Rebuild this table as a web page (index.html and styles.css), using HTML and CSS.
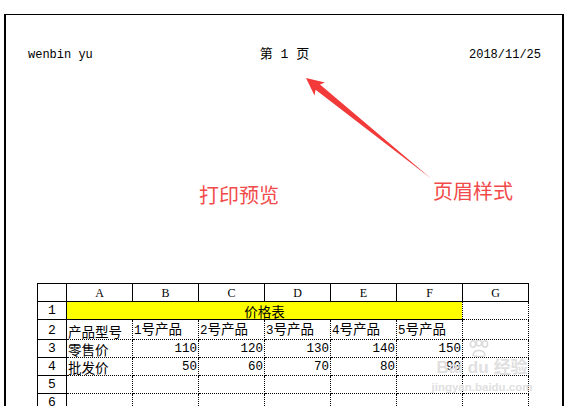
FILE: index.html
```html
<!DOCTYPE html>
<html lang="zh-CN">
<head>
<meta charset="utf-8">
<title>打印预览</title>
<link rel="stylesheet" href="styles.css">
</head>
<body>
<div class="page">
  <div class="header">
    <span class="h-left">wenbin yu</span>
    <span class="h-center">第 1 页</span>
    <span class="h-right">2018/11/25</span>
  </div>
  <table class="sheet">
    <colgroup>
      <col class="c-num"><col class="c"><col class="c"><col class="c"><col class="c"><col class="c"><col class="c"><col class="c">
    </colgroup>
    <tr class="colhead">
      <td></td><td>A</td><td>B</td><td>C</td><td>D</td><td>E</td><td>F</td><td>G</td>
    </tr>
    <tr>
      <td class="rn">1</td><td class="title" colspan="6">价格表</td><td class="d"></td>
    </tr>
    <tr>
      <td class="rn">2</td><td class="d">产品型号</td><td class="d"><span class="m">1</span>号产品</td><td class="d"><span class="m">2</span>号产品</td><td class="d"><span class="m">3</span>号产品</td><td class="d"><span class="m">4</span>号产品</td><td class="d"><span class="m">5</span>号产品</td><td class="d"></td>
    </tr>
    <tr>
      <td class="rn">3</td><td class="d">零售价</td><td class="d n">110</td><td class="d n">120</td><td class="d n">130</td><td class="d n">140</td><td class="d n">150</td><td class="d"></td>
    </tr>
    <tr>
      <td class="rn">4</td><td class="d">批发价</td><td class="d n">50</td><td class="d n">60</td><td class="d n">70</td><td class="d n">80</td><td class="d n">90</td><td class="d"></td>
    </tr>
    <tr>
      <td class="rn">5</td><td class="d"></td><td class="d"></td><td class="d"></td><td class="d"></td><td class="d"></td><td class="d"></td><td class="d"></td>
    </tr>
    <tr>
      <td class="rn">6</td><td class="d"></td><td class="d"></td><td class="d"></td><td class="d"></td><td class="d"></td><td class="d"></td><td class="d"></td>
    </tr>
  </table>
</div>

<svg class="arrow" width="567" height="406" viewBox="0 0 567 406">
  <polygon points="306,78 325,82.5 320,84.6 431,178.5 315.6,89.8 314.5,95.5" fill="#f23a3a"/>
</svg>
<div class="note note-preview">打印预览</div>
<div class="note note-header">页眉样式</div>

<div class="watermark">
  <svg class="paw" width="26" height="18" viewBox="0 0 26 18">
    <ellipse cx="7" cy="4" rx="2.6" ry="3.2" fill="none" stroke="#dcdcdc" stroke-width="1.6"/>
    <ellipse cx="13" cy="3" rx="2.6" ry="3" fill="none" stroke="#dcdcdc" stroke-width="1.6"/>
    <ellipse cx="19" cy="4" rx="2.6" ry="3.2" fill="none" stroke="#dcdcdc" stroke-width="1.6"/>
    <path d="M7 15 C8 9 18 9 19 15 C18 17 8 17 7 15 Z" fill="none" stroke="#dcdcdc" stroke-width="1.6"/>
  </svg>
  <div class="wm-brand">Bai<span class="wm-du">du</span>经验</div>
  <div class="wm-url">jingyan.baidu.com</div>
</div>
</body>
</html>
```
FILE: styles.css
```css
html, body {
  margin: 0;
  padding: 0;
  background: #fff;
  overflow: hidden;
}
body {
  width: 567px;
  height: 406px;
  position: relative;
  font-family: "Liberation Mono", "Noto Sans CJK SC", monospace;
  color: #000;
}
.page {
  margin: 14px 0 0 4px;
  width: 556px;
  height: 400px;
  border-top: 1px solid #000;
  border-left: 2px solid #000;
  border-right: 2px solid #000;
  box-sizing: content-box;
}
.header {
  display: grid;
  grid-template-columns: 1fr auto 1fr;
  align-items: center;
  padding: 33px 21px 0 22px;
  font-size: 12px;
  line-height: 14px;
}
.h-left { justify-self: start; }
.h-center {
  justify-self: center;
  font-size: 13px;
}
.h-right { justify-self: end; }

.sheet {
  margin: 221px 0 0 31px;
  border-collapse: collapse;
  table-layout: fixed;
  width: 491px;
  font-family: "Liberation Mono", "Noto Sans CJK SC", monospace;
}
.c-num { width: 29px; }
.c { width: 66px; }
.sheet td {
  height: 17px;
  padding: 0 1px;
  line-height: 16px;
  border: 1px solid #000;
  font-size: 14px;
  white-space: nowrap;
  overflow: hidden;
  vertical-align: bottom;
}
.colhead td {
  text-align: center;
  font-size: 12px;
  font-family: "Liberation Serif", serif;
}
.sheet td.rn {
  text-align: center;
  font-size: 13px;
}
.sheet td.d {
  border: 1px dotted #000;
  font-family: "Noto Sans CJK SC", sans-serif;
  font-size: 13.5px;
}
.sheet td.n {
  text-align: right;
  font-family: "Liberation Mono", monospace;
  font-size: 12.5px;
}
.m {
  font-family: "Liberation Mono", monospace;
  font-size: 12.5px;
}
.sheet td.title {
  background: #ffff00;
  text-align: center;
  border: 1px solid #000;
  border-right: 1px dotted #000;
  font-family: "Noto Sans CJK SC", sans-serif;
  font-size: 13.5px;
}

.arrow {
  position: absolute;
  left: 0;
  top: 0;
  pointer-events: none;
}
.note {
  position: absolute;
  font-family: "Noto Sans CJK SC", sans-serif;
  font-size: 20px;
  line-height: 20px;
  color: #f24a4a;
}
.note-preview { left: 199px; top: 185px; }
.note-header { left: 433px; top: 181px; }

.watermark {
  position: absolute;
  left: 428px;
  top: 340px;
  width: 108px;
  display: flex;
  flex-direction: column;
  align-items: center;
  color: #e0e0e0;
  font-family: "Liberation Sans", "Noto Sans CJK SC", sans-serif;
  pointer-events: none;
}
.paw { margin-left: -6px; }
.wm-brand {
  font-size: 17px;
  font-weight: bold;
  line-height: 17px;
  margin-top: 1px;
}
.wm-du { margin: 0 5px; }
.wm-url {
  font-size: 11.5px;
  font-weight: bold;
  line-height: 12px;
  margin-top: 5px;
}
```
